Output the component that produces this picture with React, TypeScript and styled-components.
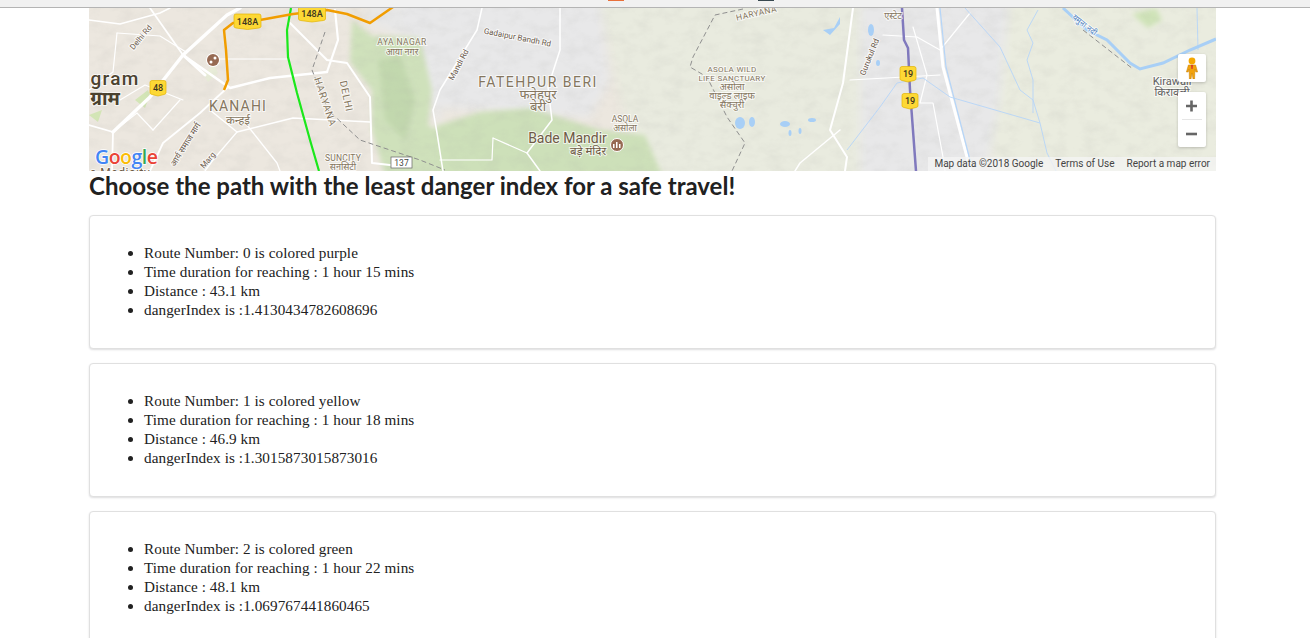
import React from "react";
import styled, { createGlobalStyle } from "styled-components";

const Global = createGlobalStyle`
  html, body { margin: 0; padding: 0; background: #fff; height: 100%; overflow: hidden; }
  #root { height: 100%; }
`;

const Page = styled.div`
  height: 638px;
  overflow: hidden;
  background: #fff;
`;

const BrowserEdge = styled.div`
  position: relative;
  height: 7px;
  background: #f1f1f1;
  border-bottom: 1px solid #b4b4b4;
`;

const EdgeMark = styled.span<{ $left: number; $width: number; $color: string }>`
  position: absolute;
  top: 0;
  left: ${(p) => p.$left}px;
  width: ${(p) => p.$width}px;
  height: 1px;
  background: ${(p) => p.$color};
`;

const Container = styled.main`
  width: 1127px;
  margin-left: 89px;
`;

const MapFrame = styled.section`
  position: relative;
  height: 163px;
  overflow: hidden;
`;

const MapSvg = styled.svg`
  display: block;
  width: 1127px;
  height: 163px;
`;

const Label = styled.text<{ $size?: number; $color?: string; $spacing?: number; $weight?: number }>`
  font-family: Roboto, "Noto Sans", "Liberation Sans", sans-serif;
  font-size: ${(p) => p.$size ?? 9}px;
  font-weight: ${(p) => p.$weight ?? 400};
  letter-spacing: ${(p) => p.$spacing ?? 0}px;
  fill: ${(p) => p.$color ?? "#85765e"};
  stroke: rgba(255, 255, 255, 0.7);
  stroke-width: 2px;
  paint-order: stroke;
  text-anchor: middle;
`;

const Shield = styled.text`
  font-family: Roboto, "Liberation Sans", sans-serif;
  font-size: 9px;
  font-weight: 500;
  fill: #3c3520;
  text-anchor: middle;
`;

const GoogleMark = styled.text`
  font-family: "Open Sans", Roboto, sans-serif;
  font-size: 19.5px;
  font-weight: 600;
  letter-spacing: -0.5px;
  stroke: #fff;
  stroke-width: 1.5px;
  paint-order: stroke;
`;

const Attribution = styled.div`
  position: absolute;
  right: 0;
  bottom: 0;
  box-sizing: border-box;
  display: flex;
  height: 14px;
  padding-bottom: 1px;
  align-items: center;
  background: rgba(245, 245, 245, 0.72);
  font-family: Roboto, "Liberation Sans", sans-serif;
  font-size: 10px;
  color: #444;
  white-space: nowrap;
`;

const AttributionItem = styled.span`
  padding: 0 6px;
`;

const ControlBox = styled.div<{ $top: number; $height: number }>`
  position: absolute;
  left: 1089px;
  top: ${(p) => p.$top}px;
  width: 28px;
  height: ${(p) => p.$height}px;
  background: #fff;
  border-radius: 2px;
  box-shadow: 0 1px 3px rgba(0, 0, 0, 0.2);
  display: flex;
  flex-direction: column;
  align-items: center;
  justify-content: center;
`;

const ZoomBtn = styled.div`
  flex: 1;
  width: 100%;
  display: flex;
  align-items: center;
  justify-content: center;
`;

const ZoomDivider = styled.div`
  width: 20px;
  height: 1px;
  background: #e6e6e6;
`;

const Title = styled.h2`
  margin: 0;
  height: 44px;
  font-family: Lato, "Liberation Sans", sans-serif;
  font-size: 24px;
  font-weight: 700;
  line-height: 30px;
  color: #212121;
`;

const Card = styled.article`
  box-sizing: border-box;
  height: 134px;
  margin-bottom: 14px;
  padding: 14px;
  background: #fff;
  border: 1px solid #e0e0e0;
  border-radius: 4px;
  box-shadow: 0 1px 2px rgba(34, 36, 38, 0.15);
`;

const Facts = styled.ul`
  margin: 13px 0;
  padding-left: 40px;
  font-family: "Liberation Serif", "Times New Roman", serif;
  font-size: 15.2px;
  line-height: 19px;
  letter-spacing: 0.08px;
  color: #212121;
`;

const routes = [
  { n: 0, color: "purple", time: "1 hour 15 mins", km: "43.1 km", danger: "1.4130434782608696" },
  { n: 1, color: "yellow", time: "1 hour 18 mins", km: "46.9 km", danger: "1.3015873015873016" },
  { n: 2, color: "green", time: "1 hour 22 mins", km: "48.1 km", danger: "1.069767441860465" },
];

const whiteRoads: [string, number][] = [
  ["M89 20 L120 24 L160 13 L170 8", 1.6],
  ["M117 33 L160 36 L186 52", 1.2],
  ["M117 33 L113 72 L89 90", 1.2],
  ["M113 132 L150 97 L183 55 L227 15 L240 8", 3.4],
  ["M89 125 L113 132 L112 171", 1.8],
  ["M113 132 L137 113 L153 130", 1.2],
  ["M153 130 L180 100", 1.2],
  ["M150 8 L183 55", 1.8],
  ["M183 55 L230 88 L270 78 L327 72", 2.6],
  ["M183 55 L205 75", 3],
  ["M215 59 L290 59", 1],
  ["M327 72 L338 40 L335 10", 2.2],
  ["M290 23 L327 60 L347 63 L370 97 L372 163 L390 165", 2],
  ["M227 88 L200 113 L163 143 L150 171", 1.8],
  ["M210 110 L237 132 L293 118 L370 122", 1.4],
  ["M247 125 L277 163 L280 171", 1.3],
  ["M237 132 L213 160 L205 171", 1.3],
  ["M183 100 L145 85 L120 100", 1.1],
  ["M482 8 L477 30 L440 90 L433 110 L437 133 L443 171", 1.5],
  ["M560 8 L560 50 L548 87 L552 120 L527 153 L540 171", 1.5],
  ["M493 138 L527 153", 1.2],
  ["M493 138 L492 160 L440 160", 1.2],
  ["M840 130 L800 163 L795 171", 1.5],
  ["M853 8 L843 83 L830 130 L847 157 L845 171", 2],
  ["M850 80 L940 75", 1.2],
  ["M883 35 L917 37 L940 50 L970 13", 1.2],
  ["M913 27 L927 75 L920 103 L933 103 L943 157 L945 171", 1.2],
  ["M937 8 L943 67 L967 157 L970 171", 3],
];

const Pegman = () => (
  <svg width="14" height="22" viewBox="0 0 14 22" aria-hidden="true">
    <circle cx="7" cy="4" r="3.4" fill="#f5a800" />
    <path d="M3.400 8h7.200l2 7h-1.800l-.9-3-.3 10H8l-1-6-1 6H4.400l-.3-10-.9 3H1.400z" fill="#f2a20c" stroke="#c77f00" strokeWidth=".5" />
    <path d="M6 8h2l-.4 4h-1.200z" fill="#d8382a" />
  </svg>
);

const Road = ({ d, w }: { d: string; w: number }) => (
  <path d={d} fill="none" stroke="#fff" strokeWidth={w} strokeLinejoin="round" strokeLinecap="round" />
);

const ShieldIcon = ({ x, y, text, w = 27 }: { x: number; y: number; text: string; w?: number }) => (
  <g transform={`translate(${x} ${y})`}>
    <path
      d={`M${-w / 2 + 2} -7.500 H${w / 2 - 2} Q${w / 2} -7.500 ${w / 2} -5.500 V5 Q${w / 2} 6 ${w / 2 - 2} 6.500 L0 8 L${-w / 2 + 2} 6.500 Q${-w / 2} 6 ${-w / 2} 5 V-5.500 Q${-w / 2} -7.500 ${-w / 2 + 2} -7.500Z`}
      fill="#fdd835"
      stroke="#e3b505"
      strokeWidth=".7"
    />
    <Shield y="3">{text}</Shield>
  </g>
);

const MapCanvas = () => (
  <MapSvg viewBox="89 8 1127 163" role="img" aria-label="Map of routes south of Delhi">
    <defs>
      <filter id="terrain" x="0" y="0" width="100%" height="100%">
        <feTurbulence type="fractalNoise" baseFrequency="0.06 0.09" numOctaves="4" seed="11" />
        <feColorMatrix values="0 0 0 0 0.4  0 0 0 0 0.4  0 0 0 0 0.38  1.1 0 0 0 -0.44" />
      </filter>
      <filter id="soft"><feGaussianBlur stdDeviation="5" /></filter>
      <filter id="softer"><feGaussianBlur stdDeviation="2.500" /></filter>
    </defs>
    <rect x="89" y="8" width="1127" height="163" fill="#ece7df" />
    <g filter="url(#soft)">
      <path d="M600 0 H860 V180 H650 L620 100Z" fill="#e9ebdf" />
      <path d="M1000 0 H1230 V180 H990Z" fill="#eaecdf" />
      <path d="M860 0 H1010 L1000 100 L985 180 H860Z" fill="#e8e8e9" />
      <path d="M435 0 H600 L610 80 L590 118 L440 108Z" fill="#e8e8e9" />
      <path d="M365 5 H450 V40 L400 36 L370 25Z" fill="#e8e8e8" />
      <path d="M440 0 H400 L435 120 L440 130Z" fill="#e8e8e9" />
    </g>
    <g filter="url(#softer)">
      <path d="M352 20 L372 36 L420 38 L432 90 L428 125 L445 135 L440 175 L385 175 L372 130 L372 90 L350 62Z" fill="#cfe1bb" />
      <path d="M378 60 L400 55 L415 100 L405 140 L385 120Z" fill="#c2d8ae" />
      <path d="M436 126 L480 112 L530 108 L600 130 L645 135 L662 175 L436 175Z" fill="#cde0b9" />
      <path d="M1132 14 L1156 8 L1162 20 L1148 28Z" fill="#cfe3b8" />
    </g>
    <path d="M203 74 L214 65 L218 73 L208 82Z" fill="#e8ecd8" />
    <path d="M135 100 L145 108 L150 95 L148 90Z" fill="#d3e5b6" />
    <path d="M89 115 L102 110 L98 122Z" fill="#d3e5b6" />
    <rect x="89" y="8" width="1127" height="163" filter="url(#terrain)" opacity=".22" />

    {whiteRoads.map(([d, w]) => (
      <Road key={d} d={d} w={w} />
    ))}

    <g fill="none" stroke="#b5d5f8" strokeWidth=".9">
      <path d="M847 150 L880 107 L897 83 L923 78 L950 97 L1040 123 L1047 153 L1056 171" />
      <path d="M965 8 L1000 47 L1020 90 L1033 100 L1040 123" />
      <path d="M1038 10 L1027 30 L1033 43 L1027 60 L1033 80 L1033 113" />
      <path d="M1197 8 L1198 50" />
    </g>
    <path d="M940 8 L946 67 L970 160" fill="none" stroke="#b5d5f8" strokeWidth="1.200" />
    <path d="M1063 8 L1087 30 L1107 40 L1130 63 L1140 69 L1163 63 L1190 50 L1216 39" fill="none" stroke="#a8cff6" strokeWidth="3" />
    <g fill="#a8cff6">
      <ellipse cx="740" cy="123" rx="5" ry="6" />
      <ellipse cx="752" cy="122" rx="3" ry="5" />
      <ellipse cx="785" cy="124" rx="5" ry="3" />
      <ellipse cx="790" cy="133" rx="1.500" ry="3" />
      <ellipse cx="800" cy="131" rx="1.500" ry="3" />
      <ellipse cx="812" cy="120" rx="4" ry="2" />
      <path d="M823 30 L834 28 L840 17 L840 24 L830 35Z" />
      <ellipse cx="871" cy="30" rx="3" ry="6" />
      <ellipse cx="878" cy="63" rx="2" ry="3" />
    </g>

    <g fill="none" stroke="#8f8f8f" strokeWidth="1" strokeDasharray="5 3">
      <path d="M743 9 L715 15 L693 57 L690 67 L707 77 L727 117 L745 143 L732 171" />
      <path d="M325 32 L312 70 L328 110 L360 140 L420 160 L445 170" />
      <path d="M1083 30 L1133 69" />
    </g>

    <path d="M291 8 L287 30 L288 57 L297 93 L310 140 L319 171" fill="none" stroke="#1be81b" strokeWidth="2.200" />
    <path d="M224 90 L228 80 L226 50 L224 30 L233 23 L260 20 L293 14 L327 10 L347 14 L370 23 L393 7" fill="none" stroke="#f19d00" strokeWidth="2.500" strokeLinejoin="round" />
    <path d="M902 8 L904 40 L908 48 L910 90 L916 171" fill="none" stroke="#8079bd" strokeWidth="2.500" />

    <ShieldIcon x={247.5} y={21.500} text="148A" />
    <ShieldIcon x={312} y={14} text="148A" />
    <ShieldIcon x={158} y={88} text="48" w={16} />
    <ShieldIcon x={908} y={74} text="19" w={16} />
    <ShieldIcon x={910} y={101} text="19" w={16} />

    <rect x="391" y="157" width="21" height="11" fill="#fff" stroke="#666" strokeWidth=".7" />
    <Label x="401.500" y="166" $size={8.500} $color="#444">137</Label>

    <circle cx="213" cy="60" r="7" fill="#fff" />
    <circle cx="213" cy="60" r="6" fill="#976a53" />
    <circle cx="211" cy="62" r="1.500" fill="#fff" />
    <circle cx="215" cy="58" r="1.500" fill="#fff" />
    <circle cx="617" cy="145" r="6.500" fill="#976a53" stroke="#fff" />
    <path d="M613 148v-4h1.500v4zM616 148v-6h1.500v6zM619 148v-4h1.500v4z" fill="#fff" />

    <Label x="115" y="85" $size={19} $color="#4b422f" $weight={500} $spacing={1.300}>gram</Label>
    <Label x="105" y="105" $size={19} $color="#4b422f" $weight={700}>ग्राम</Label>
    <Label x="238" y="111" $size={14} $spacing={1.200}>KANAHI</Label>
    <Label x="238" y="124" $size={11.500}>कन्हई</Label>
    <Label x="402" y="45" $size={8.500} $spacing={.4}>AYA NAGAR</Label>
    <Label x="402" y="55" $size={9}>आया नगर</Label>
    <Label x="343" y="161" $size={8.500} $spacing={.2}>SUNCITY</Label>
    <Label x="343" y="170" $size={9}>सनसिटी</Label>
    <Label x="538" y="87" $size={14} $spacing={1.500}>FATEHPUR BERI</Label>
    <Label x="538" y="99" $size={13}>फतेहपुर</Label>
    <Label x="538" y="111" $size={13}>बेरी</Label>
    <Label x="625" y="122" $size={8.500}>ASOLA</Label>
    <Label x="625" y="131" $size={9}>असोला</Label>
    <Label x="567.500" y="143" $size={14} $color="#6e5a45">Bade Mandir</Label>
    <Label x="588" y="155" $size={11.500} $color="#6e5a45">बड़े मंदिर</Label>
    <Label x="732" y="72" $size={8} $spacing={.3}>ASOLA WILD</Label>
    <Label x="732" y="81" $size={8} $spacing={.3}>LIFE SANCTUARY</Label>
    <Label x="732" y="90" $size={9.500}>असोला</Label>
    <Label x="732" y="99" $size={9.500}>वाइल्ड लाइफ</Label>
    <Label x="732" y="108" $size={9.500}>सैंक्चुरी</Label>
    <Label transform="translate(757 16) rotate(-13)" $size={8.500} $spacing={.4}>HARYANA</Label>
    <Label x="893" y="19" $size={9}>एस्टेट</Label>
    <Label x="1172" y="85" $size={11} $color="#5f5f5f">Kirawali</Label>
    <Label x="1172" y="96" $size={11} $color="#5f5f5f">किरावली</Label>
    <Label transform="translate(143 39) rotate(-50)" $size={8} $color="#6b5a4c">Delhi Rd</Label>
    <Label transform="translate(461 66) rotate(-62)" $size={8} $color="#6b5a4c">Mandi Rd</Label>
    <Label transform="translate(517 40) rotate(11)" $size={8} $color="#6b5a4c">Gadaipur Bandh Rd</Label>
    <Label transform="translate(872 58) rotate(-68)" $size={8} $color="#6b5a4c">Gurukul Rd</Label>
    <Label transform="translate(322 103) rotate(72)" $size={10} $spacing={.8}>HARYANA</Label>
    <Label transform="translate(343 97) rotate(78)" $size={10} $spacing={.8}>DELHI</Label>
    <Label transform="translate(188 146) rotate(-58)" $size={8.500} $color="#6b5a4c">आर्य समाज मार्ग</Label>
    <Label transform="translate(210 162) rotate(-50)" $size={8} $color="#6b5a4c">Marg</Label>
    <Label transform="translate(1083 27) rotate(38)" $size={8} $color="#4d7fc0">यमुना नदी</Label>
    <Label x="120" y="177" $size={12} $color="#6e5a45" $spacing={.6}>e Medicity</Label>

    <GoogleMark x="95" y="164">
      <tspan fill="#4285f4">G</tspan>
      <tspan fill="#ea4335">o</tspan>
      <tspan fill="#fbbc05">o</tspan>
      <tspan fill="#4285f4">g</tspan>
      <tspan fill="#34a853">l</tspan>
      <tspan fill="#ea4335">e</tspan>
    </GoogleMark>
  </MapSvg>
);

export default function App() {
  return (
    <Page>
      <Global />
      <BrowserEdge>
        <EdgeMark $left={608} $width={16} $color="#e8703a" />
        <EdgeMark $left={758} $width={16} $color="#37474f" />
      </BrowserEdge>
      <Container>
        <MapFrame>
          <MapCanvas />
          <ControlBox $top={46} $height={28}>
            <Pegman />
          </ControlBox>
          <ControlBox $top={84} $height={55}>
            <ZoomBtn>
              <svg width="12" height="12" viewBox="0 0 12 12" aria-hidden="true">
                <path d="M0 6h11M5.500 .5v11" stroke="#666" strokeWidth="2.600" />
              </svg>
            </ZoomBtn>
            <ZoomDivider />
            <ZoomBtn>
              <svg width="12" height="12" viewBox="0 0 12 12" aria-hidden="true">
                <path d="M0 6h11" stroke="#666" strokeWidth="2.600" />
              </svg>
            </ZoomBtn>
          </ControlBox>
          <Attribution>
            <AttributionItem>Map data ©2018 Google</AttributionItem>
            <AttributionItem>Terms of Use</AttributionItem>
            <AttributionItem>Report a map error</AttributionItem>
          </Attribution>
        </MapFrame>
        <Title>Choose the path with the least danger index for a safe travel!</Title>
        {routes.map((r) => (
          <Card key={r.n}>
            <Facts>
              <li>Route Number: {r.n} is colored {r.color}</li>
              <li>Time duration for reaching : {r.time}</li>
              <li>Distance : {r.km}</li>
              <li>dangerIndex is :{r.danger}</li>
            </Facts>
          </Card>
        ))}
      </Container>
    </Page>
  );
}
